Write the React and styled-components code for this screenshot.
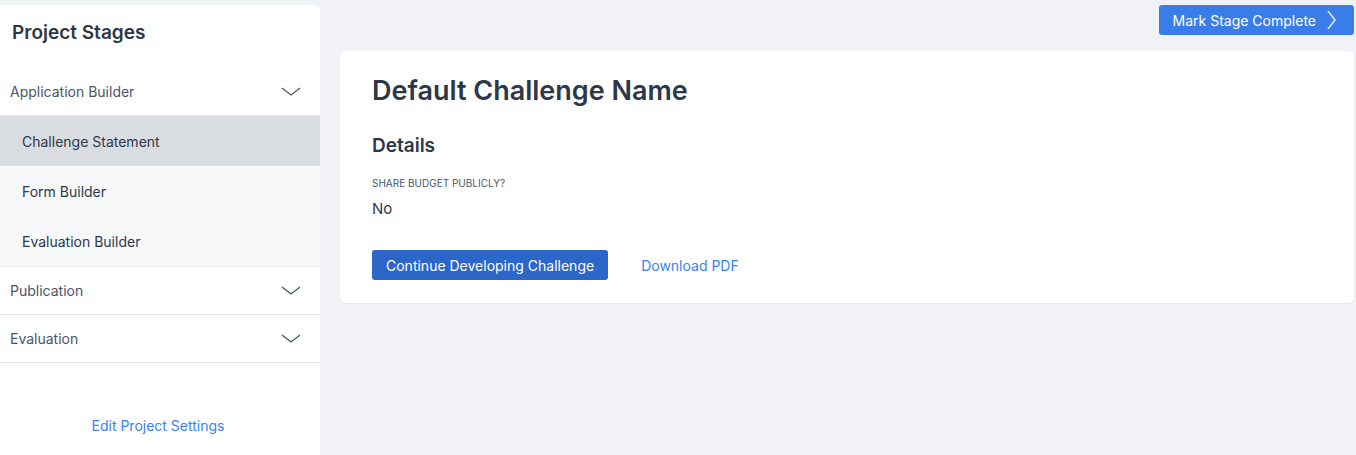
import React from "react";
import styled, { createGlobalStyle } from "styled-components";

const GlobalStyle = createGlobalStyle`
  html, body {
    margin: 0;
    padding: 0;
    background: #f1f2f6;
    font-family: Inter, "Noto Sans", "Liberation Sans", sans-serif;
  }
`;

const Chevron = ({ dir = "down", size = 20, color = "#4a5568", weight = 1.3 }) => (
  <svg width={size} height={size} viewBox="0 0 20 20" fill="none">
    {dir === "down" ? (
      <path d="M1 6l9 7 9-7" stroke={color} strokeWidth={weight} />
    ) : (
      <path d="M6 1l7 9-7 9" stroke={color} strokeWidth={weight} />
    )}
  </svg>
);

const stages = [
  {
    name: "Application Builder",
    open: true,
    items: ["Challenge Statement", "Form Builder", "Evaluation Builder"],
    active: 0,
  },
  { name: "Publication" },
  { name: "Evaluation" },
];

const App = () => {
  return (
    <Page>
      <GlobalStyle />
      <Sidebar>
        <SideTitle>Project Stages</SideTitle>
        <StageList>
          {stages.map((stage) => (
            <Stage key={stage.name}>
              <StageHeader>
                <span>{stage.name}</span>
                <Chevron />
              </StageHeader>
              {stage.open && (
                <SubList>
                  {stage.items.map((item, i) => (
                    <SubItem key={item} active={i === stage.active}>
                      {item}
                    </SubItem>
                  ))}
                </SubList>
              )}
            </Stage>
          ))}
        </StageList>
        <SettingsLink>Edit Project Settings</SettingsLink>
      </Sidebar>

      <Main>
        <TopBar>
          <CompleteButton>
            Mark Stage Complete
            <Chevron dir="right" size={20} color="#dbe7fc" weight={1.6} />
          </CompleteButton>
        </TopBar>
        <Card>
          <Title>Default Challenge Name</Title>
          <Subtitle>Details</Subtitle>
          <FieldLabel>Share budget publicly?</FieldLabel>
          <FieldValue>No</FieldValue>
          <Actions>
            <PrimaryButton>Continue Developing Challenge</PrimaryButton>
            <TextLink>Download PDF</TextLink>
          </Actions>
        </Card>
      </Main>
    </Page>
  );
};

export default App;

const Page = styled.div`
  display: flex;
  align-items: stretch;
  height: 455px;
  overflow: hidden;
`;

const Sidebar = styled.aside`
  display: flex;
  flex-direction: column;
  width: 320px;
  flex-shrink: 0;
  margin-top: 5px;
  background: #ffffff;
  border-radius: 0 6px 0 0;
`;

const SideTitle = styled.h2`
  margin: 0;
  padding: 16px 12px 0;
  height: 47px;
  font-size: 19px;
  font-weight: 600;
  color: #2d3748;
`;

const StageList = styled.div`
  display: flex;
  flex-direction: column;
  margin-top: 0;
`;

const Stage = styled.div`
  border-bottom: 1px solid #e5e7eb;
`;

const StageHeader = styled.div`
  display: flex;
  align-items: center;
  justify-content: space-between;
  height: 47px;
  padding: 0 19px 0 10px;
  font-size: 14px;
  color: #4a5568;
`;

const SubList = styled.div`
  display: flex;
  flex-direction: column;
  background: #f7f8fa;
  border-top: 1px solid #e5e7eb;
`;

const SubItem = styled.div`
  display: flex;
  align-items: center;
  height: 50px;
  padding-left: 22px;
  font-size: 14px;
  color: #2d3748;
  background: ${({ active }) => (active ? "#d9dce1" : "transparent")};
`;

const SettingsLink = styled.a`
  margin-top: 54px;
  padding-right: 4px;
  text-align: center;
  font-size: 14px;
  color: #3b82f6;
  cursor: pointer;
`;

const Main = styled.main`
  flex: 1;
  display: flex;
  flex-direction: column;
  padding: 5px 2px 0 20px;
`;

const TopBar = styled.div`
  display: flex;
  justify-content: flex-end;
  margin-bottom: 16px;
`;

const CompleteButton = styled.button`
  display: flex;
  align-items: center;
  gap: 6px;
  height: 30px;
  padding: 0 12px 0 14px;
  border: none;
  border-radius: 3px;
  background: #3a7de8;
  color: #ffffff;
  font-family: inherit;
  font-size: 14px;
`;

const Card = styled.section`
  display: flex;
  flex-direction: column;
  align-items: flex-start;
  padding: 24px 32px 23px;
  background: #ffffff;
  border-radius: 6px;
  box-shadow: 0 1px 2px rgba(0, 0, 0, 0.05);
`;

const Title = styled.h1`
  margin: 0;
  font-size: 27px;
  font-weight: 600;
  line-height: 32px;
  color: #2d3748;
`;

const Subtitle = styled.h3`
  margin: 26px 0 0;
  font-size: 19px;
  font-weight: 600;
  line-height: 26px;
  color: #2d3748;
`;

const FieldLabel = styled.div`
  margin-top: 18px;
  font-size: 10px;
  text-transform: uppercase;
  color: #4a5568;
`;

const FieldValue = styled.div`
  margin-top: 10px;
  font-size: 15px;
  color: #2d3748;
`;

const Actions = styled.div`
  display: flex;
  align-items: center;
  gap: 33px;
  margin-top: 32px;
`;

const PrimaryButton = styled.button`
  height: 30px;
  padding: 0 14px;
  border: none;
  border-radius: 3px;
  background: #2c66c9;
  color: #ffffff;
  font-family: inherit;
  font-size: 14px;
`;

const TextLink = styled.a`
  font-size: 14px;
  color: #3b82f6;
  cursor: pointer;
`;
